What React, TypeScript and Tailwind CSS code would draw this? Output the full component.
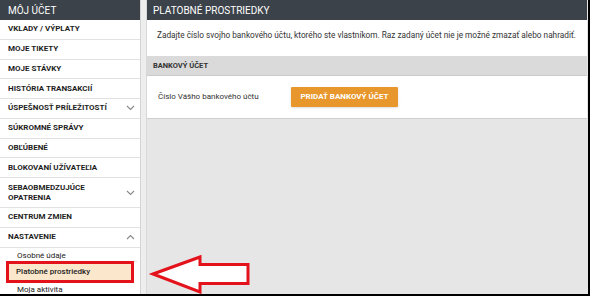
import React from 'react';

const font = { fontFamily: 'Roboto, "Noto Sans", sans-serif' };

const Chevron = ({ up }: { up?: boolean }) => (
  <svg width="9" height="6" viewBox="0 0 9 6" className="shrink-0">
    <path d={up ? 'M1 5l3.5-3.5L8 5' : 'M1 1l3.5 3.5L8 1'} fill="none" stroke="#888" strokeWidth="1.1" />
  </svg>
);

const items: { label: string; chevron?: 'up' | 'down'; tall?: boolean }[] = [
  { label: 'VKLADY / VÝPLATY' },
  { label: 'MOJE TIKETY' },
  { label: 'MOJE STÁVKY' },
  { label: 'HISTÓRIA TRANSAKCIÍ' },
  { label: 'ÚSPEŠNOSŤ PRÍLEŽITOSTÍ', chevron: 'down' },
  { label: 'SÚKROMNÉ SPRÁVY' },
  { label: 'OBĽÚBENÉ' },
  { label: 'BLOKOVANÍ UŽÍVATEĽIA' },
  { label: 'SEBAOBMEDZUJÚCE OPATRENIA', chevron: 'down', tall: true },
  { label: 'CENTRUM ZMIEN' },
  { label: 'NASTAVENIE', chevron: 'up' },
];

export default function App() {
  return (
    <div
      className="relative w-[590px] h-[296px] overflow-hidden flex bg-[#e6e6e6] border-r-2 border-b-2 border-black"
      style={font}
    >
      {/* Sidebar */}
      <div className="w-[141px] shrink-0 bg-white border-r border-[#d4d4d4] flex flex-col">
        <div className="h-[20px] shrink-0 bg-[#3b4249] text-white text-[10px] flex items-center px-[8px]">MÔJ ÚČET</div>
        {items.map((it) => (
          <div
            key={it.label}
            className={`${it.tall ? 'h-[30px]' : 'h-[19.75px]'} shrink-0 border-b border-[#e2e2e2] flex items-center justify-between pl-[8px] pr-[5px] text-[8px] font-bold text-[#1e1e1e] leading-[10px]`}
          >
            <span className={it.tall ? 'w-[90px]' : ''}>{it.label}</span>
            {it.chevron && <Chevron up={it.chevron === 'up'} />}
          </div>
        ))}
        <div className="shrink-0 pl-[12px] pr-[3px] flex flex-col">
          <div className="h-[14px] border-b border-[#e2e2e2] flex items-end pl-[5px] text-[8px] text-[#222] leading-[10px]">
            Osobné údaje
          </div>
        </div>
        <div className="shrink-0 mx-[6px] -mt-[1px] h-[22px] border-[3px] border-[#e3121b] bg-[#fbe8cc] flex items-center pl-[7px] text-[8px] font-medium text-[#222]">
          Platobné prostriedky
        </div>
        <div className="shrink-0 pl-[17px] pt-[2px] text-[8px] leading-[10px] text-[#222]">Moja aktivita</div>
      </div>

      {/* Scroll strip */}
      <div className="w-[6px] shrink-0 bg-[#eeeeee] border-r border-[#d8d8d8]" />

      {/* Main */}
      <div className="flex-1 pr-[1px]">
        <div className="bg-white border-b border-[#cfcfcf]">
          <div className="h-[20px] bg-[#3b4249] text-white text-[10px] flex items-center px-[6px]">
            PLATOBNÉ PROSTRIEDKY
          </div>
          <div className="h-[36px] pt-[10px] px-[10px] text-[8.25px] leading-[10px] text-[#333]">
            Zadajte číslo svojho bankového účtu, ktorého ste vlastníkom. Raz zadaný účet nie je možné zmazať alebo nahradiť.
          </div>
          <div className="h-[20px] bg-[#dadada] border-b border-[#cccccc] flex items-center px-[6px] text-[7.5px] font-bold text-[#333]">
            BANKOVÝ ÚČET
          </div>
          <div className="h-[42px] flex items-center pl-[11px]">
            <span className="w-[133px] text-[8px] text-[#333]">Číslo Vášho bankového účtu</span>
            <button className="h-[20px] w-[107px] bg-[#e8972c] text-white text-[8px] font-bold rounded-[1px] shadow-sm">
              PRIDAŤ BANKOVÝ ÚČET
            </button>
          </div>
        </div>
      </div>

      {/* Red arrow overlay */}
      <svg className="absolute left-[148px] top-[253px]" width="104" height="44" viewBox="0 0 104 44">
        <path
          d="M5 21 L52 4 L52 11.5 L100 11.5 L100 30.5 L52 30.5 L52 39 Z"
          fill="white"
          stroke="#e3121b"
          strokeWidth="3"
          strokeLinejoin="miter"
        />
      </svg>
    </div>
  );
}
